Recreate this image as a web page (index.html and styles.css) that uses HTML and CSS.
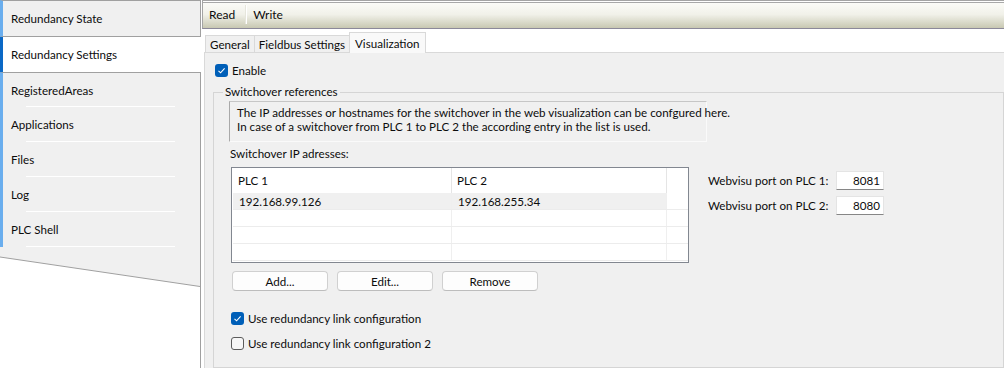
FILE: index.html
```html
<!DOCTYPE html>
<html lang="en">
<head>
  <meta charset="UTF-8">
  <meta name="viewport" content="width=device-width, initial-scale=1.0">
  <title>Redundancy Settings</title>
  <link rel="stylesheet" href="styles.css">
</head>
<body>
  <div class="app">
    <div class="sidebar">
      <div class="nav-item first">Redundancy State</div>
      <div class="nav-item active">Redundancy Settings</div>
      <div class="nav-item sep top">RegisteredAreas</div>
      <div class="nav-item sep">Applications</div>
      <div class="nav-item sep">Files</div>
      <div class="nav-item sep">Log</div>
      <div class="nav-item sep">PLC Shell</div>
      <!-- slanted end of the tab column -->
      <svg class="nav-tail" width="200" height="40" viewBox="0 0 200 40">
        <polygon points="0,0 200,0 200,39.5 0,10" fill="#f0f0f0"/>
        <line x1="0" y1="10" x2="200" y2="39.5" stroke="#a0a0a0" stroke-width="1"/>
      </svg>
    </div>

    <div class="main">
      <div class="toolbar">
        <span class="tool">Read</span>
        <span class="tool-sep"></span>
        <span class="tool">Write</span>
      </div>

      <div class="tabs">
        <div class="tab">General</div>
        <div class="tab">Fieldbus Settings</div>
        <div class="tab active">Visualization</div>
      </div>

      <div class="panel">
        <div class="check enable">
          <span class="box checked">
            <svg width="13" height="13" viewBox="0 0 13 13"><polyline points="3.5,6.8 5.6,8.8 9.6,4.4" fill="none" stroke="#fff" stroke-width="1.1"/></svg>
          </span>
          Enable
        </div>

        <div class="group">
          <span class="legend">Switchover references</span>

          <div class="info">
            The IP addresses or hostnames for the switchover in the web visualization can be confgured here.<br>
            In case of a switchover from PLC 1 to PLC 2 the according entry in the list is used.
          </div>

          <div class="list-label">Switchover IP adresses:</div>

          <div class="list-row">
            <div class="list">
              <div class="list-head">
                <div class="cell">PLC 1</div>
                <div class="cell">PLC 2</div>
                <div class="cell last"></div>
              </div>
              <div class="list-line selected">
                <div class="cell">192.168.99.126</div>
                <div class="cell">192.168.255.34</div>
                <div class="cell last"></div>
              </div>
              <div class="list-line">
                <div class="cell"></div>
                <div class="cell"></div>
                <div class="cell last"></div>
              </div>
              <div class="list-line">
                <div class="cell"></div>
                <div class="cell"></div>
                <div class="cell last"></div>
              </div>
              <div class="list-line">
                <div class="cell"></div>
                <div class="cell"></div>
                <div class="cell last"></div>
              </div>
            </div>

            <div class="ports">
              <span class="port-label">Webvisu port on PLC 1:</span>
              <span class="port-input">8081</span>
              <span class="port-label">Webvisu port on PLC 2:</span>
              <span class="port-input">8080</span>
            </div>
          </div>

          <div class="buttons">
            <button class="btn">Add...</button>
            <button class="btn">Edit...</button>
            <button class="btn">Remove</button>
          </div>

          <div class="check link1">
            <span class="box checked">
              <svg width="13" height="13" viewBox="0 0 13 13"><polyline points="3.5,6.8 5.6,8.8 9.6,4.4" fill="none" stroke="#fff" stroke-width="1.1"/></svg>
            </span>
            Use redundancy link configuration
          </div>
          <div class="check link2">
            <span class="box"></span>
            Use redundancy link configuration 2
          </div>
        </div>
      </div>
    </div>
  </div>
</body>
</html>
```

FILE: styles.css
```css
/* Windows style settings dialog */
body {
  margin: 0;
  background: #fff;
  font-family: Lato, "Liberation Sans", sans-serif;
  font-size: 11.6px;
  color: #0c0c0c;
}

.app {
  display: flex;
  height: 100vh;
  overflow: hidden;
}

/* left tab column */
.sidebar {
  width: 200px;
  flex: none;
  border-right: 1px solid #a0a0a0;
}

.nav-item {
  height: 35px;
  box-sizing: border-box;
  display: flex;
  align-items: center;
  padding-left: 8px;
  background: #f0f0f0;
  border-left: 3px solid #6aaeee;
  position: relative;
}

.nav-item.first {
  height: 37px;
  border-top: 1px solid #a0a0a0;
  border-bottom: 1px solid #a0a0a0;
}

.nav-item.active {
  background: #fff;
  border-left-color: #0b68c6;
  margin-right: -1px;
}

.nav-item.top {
  border-top: 1px solid #a0a0a0;
}

.nav-item.sep::after {
  content: "";
  position: absolute;
  left: 23px;
  width: 149px;
  bottom: 0;
  height: 1px;
  background: #fff;
}

.nav-tail {
  display: block;
}

/* right side */
.main {
  flex: 1;
  display: flex;
  flex-direction: column;
  background: #fff;
}

.toolbar {
  height: 29px;
  box-sizing: border-box;
  margin-left: 1px;
  display: flex;
  align-items: center;
  padding-left: 6px;
  font-size: 12px;
  border-top: 1px solid #a4a4a4;
  border-left: 1px solid #a4a4a4;
  border-bottom: 1px solid #8c899a;
  background: linear-gradient(#fff 0 1px, #a8a8a8 1px 2px, #fbfbf7 2px, #f1f1e9 50%, #c8c8b2 100%);
}

.tool-sep {
  width: 1px;
  height: 19px;
  margin: 0 6px 0 10px;
  background: #e6e6dc;
  border-right: 1px solid #fff;
}

.tabs {
  height: 23px;
  display: flex;
  align-items: flex-end;
  padding-left: 4px;
}

.tab {
  height: 17px;
  box-sizing: border-box;
  padding: 0 4px;
  display: flex;
  align-items: center;
  background: #f0f0f0;
  border: 1px solid #d9d9d9;
  border-bottom: none;
  margin-right: -1px;
}

.tab.active {
  height: 21px;
  margin-bottom: -1px;
  padding: 0 5px;
  background: #f9f9f9;
  position: relative;
}

.panel {
  flex: 1;
  display: flex;
  flex-direction: column;
  margin-left: 3px;
  padding: 10px 0 0 8px;
  background: #f0f0f0;
  border-top: 1px solid #d9d9d9;
  border-left: 1px solid #d9d9d9;
}

/* checkboxes */
.check {
  display: flex;
  align-items: center;
  gap: 4px;
  height: 14px;
}

.box {
  width: 13px;
  height: 13px;
  box-sizing: border-box;
  border: 1px solid #5c5c5c;
  border-radius: 3px;
  background: #f7f7f7;
  flex: none;
}

.box.checked {
  border: none;
  background: #005fb8;
}

.box svg {
  display: block;
}

.enable {
  margin-left: 2px;
}

/* group box */
.group {
  flex: 1;
  position: relative;
  margin-top: 15px;
  padding: 8px 0 0 15px;
  border: 1px solid #d5d5d5;
}

.legend {
  position: absolute;
  top: -8px;
  left: 9px;
  padding: 0 2px;
  line-height: 14px;
  background: #f0f0f0;
}

.info {
  width: 478px;
  box-sizing: border-box;
  padding: 4px 7px 7px;
  line-height: 14px;
  white-space: nowrap;
  border: 1px solid;
  border-color: #c6c6c6 #fafafa #fafafa #a9a9a9;
}

.list-label {
  margin: 5px 0 0 1px;
  line-height: 14px;
}

.list-row {
  display: flex;
  margin-top: 6px;
}

.list {
  width: 458px;
  height: 96px;
  box-sizing: border-box;
  margin-left: 2px;
  padding-left: 1px;
  border: 1px solid #828790;
  background: #fff;
  overflow: hidden;
}

.list-head,
.list-line {
  display: grid;
  grid-template-columns: 219px 215px 1fr;
}

.list-head {
  height: 25px;
}

.list-head .cell {
  display: flex;
  align-items: center;
  padding-left: 5px;
  border-right: 1px solid #e5e5e5;
}

.list-line {
  height: 17px;
  box-sizing: border-box;
  border-bottom: 1px solid #ececec;
}

.list-line .cell {
  display: flex;
  align-items: center;
  padding-left: 6px;
  border-right: 1px solid #efefef;
}

.list-line.selected .cell {
  background: #f0f0f0;
}

.list .cell.last {
  border-right: none;
  background: #fff;
}

.ports {
  display: grid;
  grid-template-columns: 128px 48px;
  grid-auto-rows: 19px;
  row-gap: 6px;
  align-items: center;
  align-content: start;
  margin-left: 19px;
  padding-top: 4px;
}

.port-input {
  height: 19px;
  box-sizing: border-box;
  padding-right: 3px;
  display: flex;
  align-items: center;
  justify-content: flex-end;
  background: #fff;
  border: 1px solid #e4e4e4;
  border-bottom-color: #868686;
}

/* buttons */
.buttons {
  display: flex;
  gap: 9px;
  margin: 8px 0 0 3px;
}

.btn {
  width: 96px;
  height: 20px;
  padding: 0;
  font: inherit;
  color: #0c0c0c;
  background: #fdfdfd;
  border: 1px solid #d0d0d0;
  border-bottom-color: #bdbdbd;
  border-radius: 4px;
}

.link1 {
  margin: 20px 0 0 2px;
}

.link2 {
  margin: 11px 0 0 2px;
}
```
